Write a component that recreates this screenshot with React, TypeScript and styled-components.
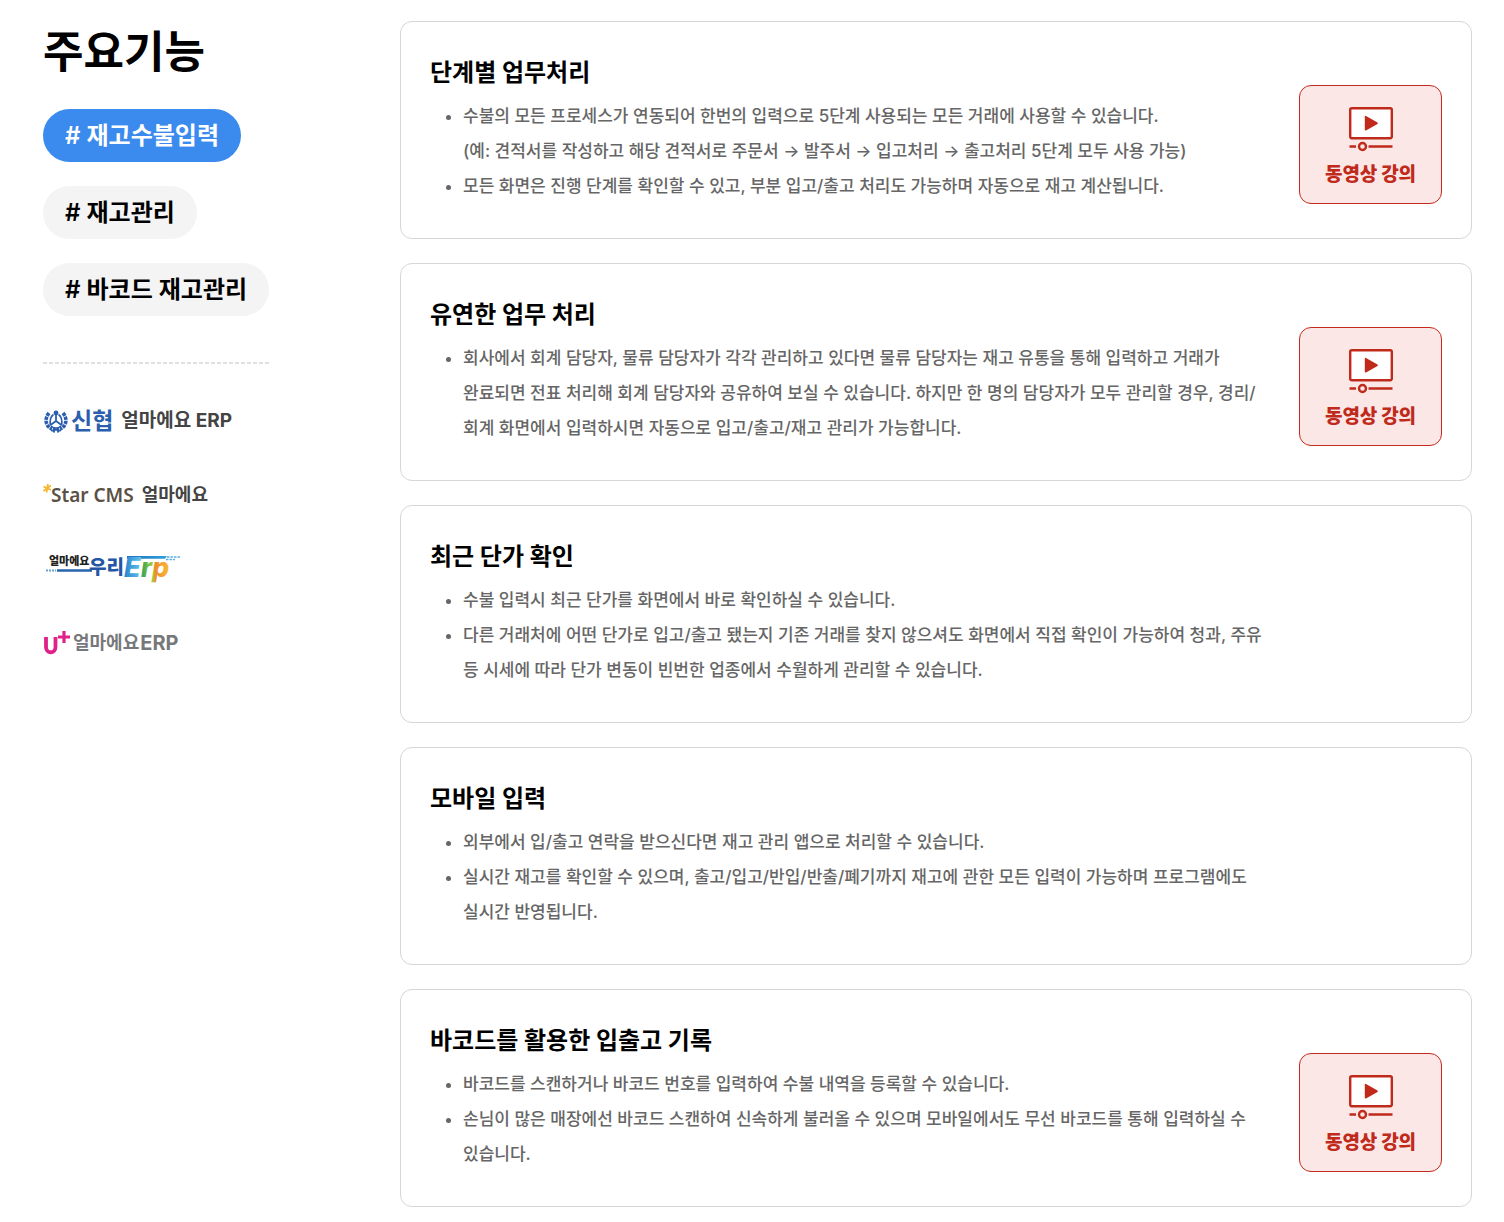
import React from "react";
import styled, { createGlobalStyle } from "styled-components";

const GlobalStyle = createGlobalStyle`
  *, *::before, *::after { box-sizing: border-box; }
  body {
    margin: 0;
    background: #fff;
    color: #000;
    font-family: Inter, "Noto Sans CJK KR", sans-serif;
  }
  h1, h2, ul { margin: 0; padding: 0; }
`;

const Page = styled.main`
  display: grid;
  grid-template-columns: 226px minmax(0, 1fr);
  gap: 131px;
  padding: 21px 32px 16px 43px;
`;

const Sidebar = styled.aside`
  display: flex;
  flex-direction: column;
`;

const PageTitle = styled.h1`
  font-size: 44px;
  font-weight: 700;
  line-height: 62px;
  margin-bottom: 26px;
`;

const TagList = styled.nav`
  display: flex;
  flex-direction: column;
  align-items: flex-start;
  gap: 24px;
`;

const Tag = styled.button<{ $active?: boolean }>`
  border: 0;
  border-radius: 27px;
  padding: 9px 22px 8px;
  background: ${(p) => (p.$active ? "#3b8aee" : "#f4f4f4")};
  color: ${(p) => (p.$active ? "#fff" : "#000")};
  font-family: inherit;
  font-size: 24px;
  font-weight: 600;
  line-height: 36px;
  white-space: nowrap;
  cursor: pointer;
`;

const Divider = styled.hr`
  width: 100%;
  height: 2px;
  margin: 46px 0 20px;
  border: 0;
  background: repeating-linear-gradient(to right, #e0e0e0 0 4px, #fff 4px 6px);
`;

const PartnerList = styled.ul`
  list-style: none;
`;

const PartnerLink = styled.a`
  display: flex;
  align-items: center;
  height: 74px;
  color: #444;
  text-decoration: none;
  white-space: nowrap;

  svg { flex: none; }
`;

const Word = styled.span<{ $color?: string; $size?: number; $weight?: number; $gap?: number; $latin?: boolean }>`
  color: ${(p) => p.$color ?? "#444"};
  font-size: ${(p) => p.$size ?? 18}px;
  font-weight: ${(p) => p.$weight ?? 700};
  font-family: ${(p) => (p.$latin ? '"Noto Sans", sans-serif' : "inherit")};
  line-height: 26px;
  margin-left: ${(p) => p.$gap ?? 0}px;
`;

const CardList = styled.section`
  display: flex;
  flex-direction: column;
  gap: 24px;
`;

const Card = styled.article`
  display: grid;
  grid-template-columns: minmax(0, 1fr) 143px;
  column-gap: 19px;
  padding: 33px 29px 34px;
  border: 1px solid #d6d6d6;
  border-radius: 12px;
`;

const CardTitle = styled.h2`
  font-size: 24px;
  font-weight: 700;
  line-height: 36px;
  margin-bottom: 8px;
`;

const Points = styled.ul`
  padding-left: 33px;
  color: #666;
  font-size: 17px;
  font-weight: 500;
  line-height: 35px;
  word-break: keep-all;
`;

const VideoButton = styled.button`
  display: flex;
  flex-direction: column;
  align-items: center;
  justify-content: space-between;
  align-self: start;
  height: 119px;
  margin-top: 30px;
  padding: 20px 0 15px;
  border: 1px solid #c42b1c;
  border-radius: 12px;
  background: #fbe7e6;
  color: #c02a1b;
  font-family: inherit;
  font-size: 19px;
  font-weight: 900;
  line-height: 26px;
  cursor: pointer;
`;

const VideoIcon = () => (
  <svg width="46" height="46" viewBox="0 0 46 46" fill="none" stroke="#c02a1b" aria-hidden="true">
    <rect x="2.2" y="2.2" width="41.6" height="30" rx="1.6" fill="#fff" strokeWidth="2.4" />
    <path d="M17.6 10.6v13.2l11.5-6.6z" fill="#c02a1b" strokeWidth="1.6" strokeLinejoin="round" />
    <path d="M1.5 40.5h6.5M20.5 40.5h24" strokeWidth="2.4" />
    <circle cx="14.5" cy="40.5" r="3.5" strokeWidth="2.4" />
  </svg>
);

const ShinhyupMark = () => (
  <svg width="26" height="24" viewBox="0 0 26 24" fill="none" stroke="#2b5fae" aria-hidden="true">
    <circle cx="13" cy="4" r="2.4" fill="#2b5fae" stroke="none" />
    <path d="M13 5v7M13 12l-5.5 4M13 12l5.5 4" strokeWidth="1.8" />
    <path d="M10.5 5.5C7.5 7.5 6.5 11 7.5 16.5M15.5 5.5c3 2 4 5.5 3 11" strokeWidth="1.6" />
    <path d="M8 17c3 2.5 7 2.5 10 0" strokeWidth="1.6" />
    <path d="M6 4C1.5 9 2 17 9 20M20 4c4.500 5 4 13-3 16" strokeWidth="3.6" strokeDasharray="3.4 .8" />
    <path d="M8 21.5c3-1 7-1 10 0M11 19v4.5M15 19v4.5" strokeWidth="2" />
  </svg>
);

const StarMark = () => (
  <svg width="8" height="24" viewBox="0 0 8 24" stroke="#f5b62c" strokeWidth="1.7" aria-hidden="true">
    <path d="M5 1L3.5 9.5M.5 3.5L8 7M8 2.5L.5 8" />
  </svg>
);

const WooriLogo = () => (
  <svg width="140" height="38" viewBox="0 -2 140 38" role="img" aria-label="얼마에요 우리Erp">
    <defs>
      <linearGradient id="band" gradientUnits="userSpaceOnUse" x1="82" y1="0" x2="123" y2="0">
        <stop offset="0" stopColor="#1f6fbe" />
        <stop offset="1" stopColor="#2f9fda" />
      </linearGradient>
      <linearGradient id="letters" gradientUnits="userSpaceOnUse" x1="82" y1="0" x2="129" y2="0">
        <stop offset="0" stopColor="#2c86cf" />
        <stop offset="0.34" stopColor="#63c2e8" />
        <stop offset="0.38" stopColor="#46a649" />
        <stop offset="0.6" stopColor="#a5cd45" />
        <stop offset="0.64" stopColor="#f08b27" />
        <stop offset="1" stopColor="#fbc43c" />
      </linearGradient>
    </defs>
    <path d="M14 18.5H49" stroke="#2565ae" strokeWidth="2.4" />
    <path d="M3 18.500h10" stroke="#6b9fd2" strokeWidth="1.8" strokeDasharray="2 1" />
    <path d="M84 4h40l-2 2.800H84z" fill="url(#band)" />
    <path d="M124 5h14M123 7.500h9" stroke="#59aee0" strokeWidth="1.5" strokeDasharray="2.5 1" />
    <g fontFamily='Inter, "Noto Sans CJK KR", sans-serif' fontWeight="800">
      <text x="6" y="13" fontSize="11" fill="#222">얼마에요</text>
      <text x="46" y="22" fontSize="19" fill="#2456a5">우리</text>
      <text x="81" y="25" fontSize="27" fontStyle="italic" fill="url(#letters)">Erp</text>
    </g>
  </svg>
);

const UplusMark = () => (
  <svg width="29" height="26" viewBox="0 0 29 26" fill="none" stroke="#e0218a" aria-hidden="true">
    <path d="M3 7v10c0 7 9.500 7 9.500 0V7" strokeWidth="3.800" />
    <path d="M21 1v12M15 7h12" strokeWidth="3.2" />
  </svg>
);

type Feature = { title: string; points: React.ReactNode[]; video?: boolean };

const features: Feature[] = [
  {
    title: "단계별 업무처리",
    video: true,
    points: [
      <>
        수불의 모든 프로세스가 연동되어 한번의 입력으로 5단계 사용되는 모든 거래에 사용할 수 있습니다.
        <br />
        (예: 견적서를 작성하고 해당 견적서로 주문서 → 발주서 → 입고처리 → 출고처리 5단계 모두 사용 가능)
      </>,
      "모든 화면은 진행 단계를 확인할 수 있고, 부분 입고/출고 처리도 가능하며 자동으로 재고 계산됩니다.",
    ],
  },
  {
    title: "유연한 업무 처리",
    video: true,
    points: [
      <>
        회사에서 회계 담당자, 물류 담당자가 각각 관리하고 있다면 물류 담당자는 재고 유통을 통해 입력하고 거래가
        완료되면 전표 처리해 회계 담당자와 공유하여 보실 수 있습니다. 하지만 한 명의 담당자가 모두 관리할 경우, 경리/
        <wbr />
        회계 화면에서 입력하시면 자동으로 입고/출고/재고 관리가 가능합니다.
      </>,
    ],
  },
  {
    title: "최근 단가 확인",
    points: [
      "수불 입력시 최근 단가를 화면에서 바로 확인하실 수 있습니다.",
      "다른 거래처에 어떤 단가로 입고/출고 됐는지 기존 거래를 찾지 않으셔도 화면에서 직접 확인이 가능하여 청과, 주유 등 시세에 따라 단가 변동이 빈번한 업종에서 수월하게 관리할 수 있습니다.",
    ],
  },
  {
    title: "모바일 입력",
    points: [
      "외부에서 입/출고 연락을 받으신다면 재고 관리 앱으로 처리할 수 있습니다.",
      "실시간 재고를 확인할 수 있으며, 출고/입고/반입/반출/폐기까지 재고에 관한 모든 입력이 가능하며 프로그램에도 실시간 반영됩니다.",
    ],
  },
  {
    title: "바코드를 활용한 입출고 기록",
    video: true,
    points: [
      "바코드를 스캔하거나 바코드 번호를 입력하여 수불 내역을 등록할 수 있습니다.",
      "손님이 많은 매장에선 바코드 스캔하여 신속하게 불러올 수 있으며 모바일에서도 무선 바코드를 통해 입력하실 수 있습니다.",
    ],
  },
];

const tags = ["# 재고수불입력", "# 재고관리", "# 바코드 재고관리"];

export default function App() {
  return (
    <>
      <GlobalStyle />
      <Page>
        <Sidebar>
          <PageTitle>주요기능</PageTitle>
          <TagList>
            {tags.map((tag, i) => (
              <Tag key={tag} type="button" $active={i === 0}>
                {tag}
              </Tag>
            ))}
          </TagList>
          <Divider />
          <PartnerList>
            <li>
              <PartnerLink href="#shinhyup">
                <ShinhyupMark />
                <Word $color="#2b5fae" $size={23} $gap={2}>신협</Word>
                <Word $size={19} $gap={8}>얼마에요 ERP</Word>
              </PartnerLink>
            </li>
            <li>
              <PartnerLink href="#starcms">
                <StarMark />
                <Word $color="#5a5044" $size={19} $weight={600} $latin>Star CMS</Word>
                <Word $gap={8}>얼마에요</Word>
              </PartnerLink>
            </li>
            <li>
              <PartnerLink href="#woori">
                <WooriLogo />
              </PartnerLink>
            </li>
            <li>
              <PartnerLink href="#uplus">
                <UplusMark />
                <Word $color="#77787b" $gap={1}>얼마에요</Word>
                <Word $color="#77787b" $size={20} $gap={1}>ERP</Word>
              </PartnerLink>
            </li>
          </PartnerList>
        </Sidebar>
        <CardList>
          {features.map((feature) => (
            <Card key={feature.title}>
              <div>
                <CardTitle>{feature.title}</CardTitle>
                <Points>
                  {feature.points.map((point, i) => (
                    <li key={i}>{point}</li>
                  ))}
                </Points>
              </div>
              {feature.video && (
                <VideoButton type="button">
                  <VideoIcon />
                  동영상 강의
                </VideoButton>
              )}
            </Card>
          ))}
        </CardList>
      </Page>
    </>
  );
}
